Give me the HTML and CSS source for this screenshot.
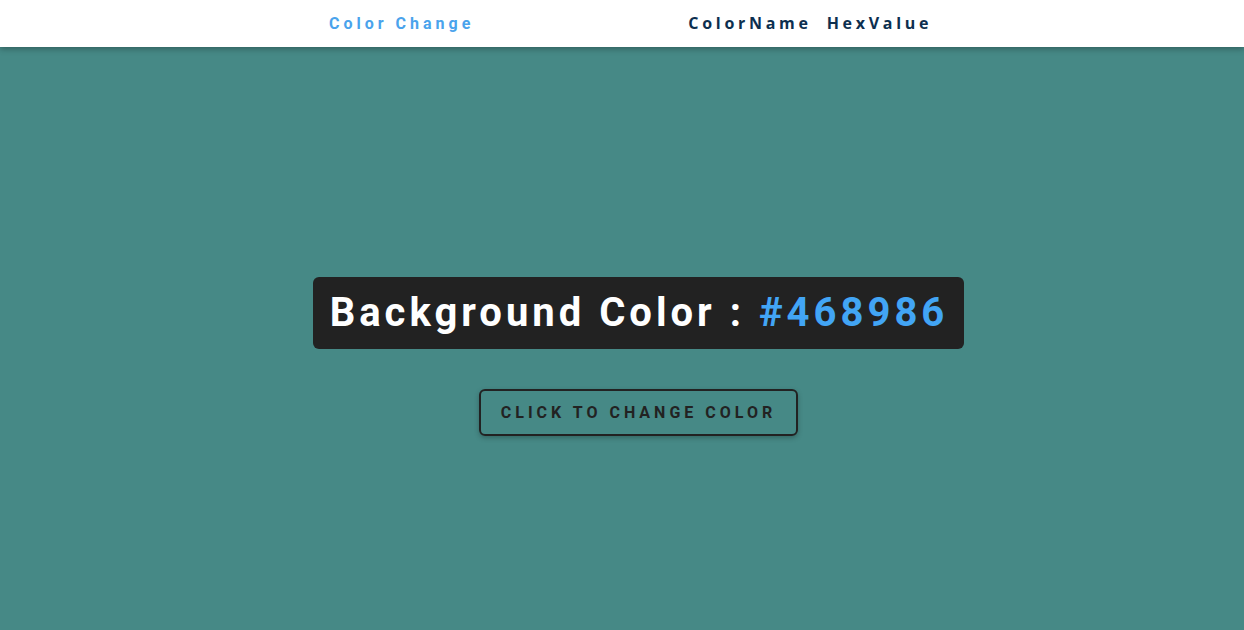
FILE: index.html
```html
<!DOCTYPE html>
<html>
<head>
<meta charset="utf-8">
<link rel="stylesheet" href="styles.css">
</head>
<body>
<nav class="nav">
  <a class="brand">Color Change</a>
  <div class="links">
    <a class="link">ColorName</a>
    <a class="link">HexValue</a>
  </div>
</nav>
<main class="main">
  <h2 class="title">Background Color : <span class="hex">#468986</span></h2>
  <button class="btn">Click to change color</button>
</main>
</body>
</html>
```

FILE: styles.css
```css
* { box-sizing: border-box; }
html, body { margin: 0; height: 100%; }
body {
  background: #468986;
  font-family: Roboto, "Liberation Sans", sans-serif;
  display: flex;
  flex-direction: column;
}
.nav {
  height: 47px;
  background: #fff;
  display: flex;
  align-items: center;
  padding-left: 329px;
  box-shadow: 0 2px 6px rgba(0,0,0,0.3);
  position: relative;
  z-index: 1;
}
.brand {
  font-weight: 700;
  font-size: 16px;
  letter-spacing: 4px;
  color: #4aa3ec;
}
.links {
  display: flex;
  gap: 15px;
  margin-left: 214px;
  margin-bottom: 2px;
}
.link {
  font-family: "Open Sans", sans-serif;
  font-weight: 700;
  font-size: 16px;
  letter-spacing: 3.7px;
  color: #0d2f4f;
}
.main {
  flex: 1;
  display: flex;
  flex-direction: column;
  align-items: center;
  padding-top: 230px;
  padding-left: 33px;
}
.title {
  margin: 0;
  background: #222;
  color: #fff;
  font-size: 40px;
  font-weight: 700;
  letter-spacing: 4px;
  padding: 10px 16px 10px 17px;
  border-radius: 6px;
  line-height: 52px;
}
.hex { color: #42a5f5; }
.btn {
  margin-top: 40px;
  background: transparent;
  border: 2px solid #222;
  border-radius: 6px;
  height: 47px;
  padding: 0 20px;
  font-family: Roboto, sans-serif;
  font-weight: 700;
  font-size: 16px;
  letter-spacing: 4px;
  text-transform: uppercase;
  color: #222;
  box-shadow: 0 2px 5px rgba(0,0,0,0.25);
}
```
